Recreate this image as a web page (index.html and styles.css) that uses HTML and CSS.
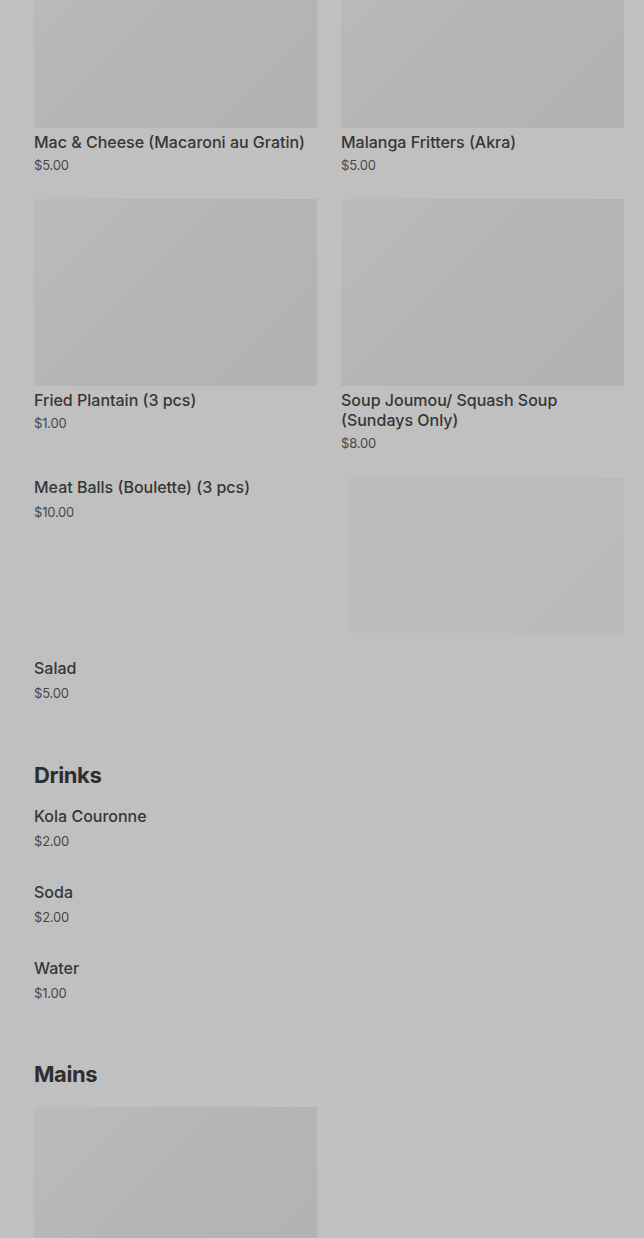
FILE: index.html
```html
<!DOCTYPE html>
<html lang="en">
<head>
  <meta charset="UTF-8">
  <meta name="viewport" content="width=device-width, initial-scale=1.0">
  <title>Menu</title>
  <link rel="stylesheet" href="styles.css">
</head>
<body>
  <main class="menu">
    <!-- Sides (heading scrolled out of view) -->
    <section class="menu-section">
      <div class="item-grid">
        <div class="item">
          <div class="item-image"></div>
          <h3 class="item-title">Mac &amp; Cheese (Macaroni au Gratin)</h3>
          <p class="item-price">$5.00</p>
        </div>
        <div class="item">
          <div class="item-image"></div>
          <h3 class="item-title">Malanga Fritters (Akra)</h3>
          <p class="item-price">$5.00</p>
        </div>
        <div class="item">
          <div class="item-image"></div>
          <h3 class="item-title">Fried Plantain (3 pcs)</h3>
          <p class="item-price">$1.00</p>
        </div>
        <div class="item">
          <div class="item-image"></div>
          <h3 class="item-title">Soup Joumou/ Squash Soup (Sundays Only)</h3>
          <p class="item-price">$8.00</p>
        </div>
        <div class="item text-only">
          <h3 class="item-title">Meat Balls (Boulette) (3 pcs)</h3>
          <p class="item-price">$10.00</p>
        </div>
        <div class="item">
          <div class="item-skeleton"></div>
        </div>
        <div class="item text-only">
          <h3 class="item-title">Salad</h3>
          <p class="item-price">$5.00</p>
        </div>
      </div>
    </section>

    <section class="menu-section">
      <h2 class="section-title">Drinks</h2>
      <div class="item-list">
        <div class="item text-only">
          <h3 class="item-title">Kola Couronne</h3>
          <p class="item-price">$2.00</p>
        </div>
        <div class="item text-only">
          <h3 class="item-title">Soda</h3>
          <p class="item-price">$2.00</p>
        </div>
        <div class="item text-only">
          <h3 class="item-title">Water</h3>
          <p class="item-price">$1.00</p>
        </div>
      </div>
    </section>

    <section class="menu-section mains">
      <h2 class="section-title">Mains</h2>
      <div class="item-grid">
        <div class="item">
          <div class="item-image"></div>
        </div>
      </div>
    </section>
  </main>
</body>
</html>
```

FILE: styles.css
```css
* {
  margin: 0;
  padding: 0;
  box-sizing: border-box;
}

body {
  font-family: Inter, "Noto Sans", sans-serif;
  background-color: #c0c0c0;
  color: #353535;
  overflow: hidden;
}

/* page is scrolled part way down the menu */
.menu {
  margin-top: -59px;
  padding: 0 20px 0 34px;
}

.menu-section + .menu-section {
  margin-top: 59px;
}

.menu-section.mains {
  margin-top: 58px;
}

.section-title {
  font-size: 22px;
  line-height: 28px;
  font-weight: 700;
  color: #2e2e2e;
  letter-spacing: -0.4px;
  margin-bottom: 17px;
}

.mains .section-title {
  margin-bottom: 19px;
}

.item-grid {
  display: grid;
  grid-template-columns: 1fr 1fr;
  column-gap: 24px;
  row-gap: 25px;
}

.item-list {
  display: flex;
  flex-direction: column;
  gap: 32px;
}

.item-image {
  height: 187px;
  background: linear-gradient(135deg, #bbbbbb 0%, #b5b5b5 45%, #b2b2b2 100%);
  margin-bottom: 4px;
}

.item-skeleton {
  height: 155px;
  margin: 1px 0 0 7px;
  background: linear-gradient(135deg, #bdbdbd, #bababa);
}

.item-title {
  font-size: 16px;
  line-height: 20px;
  font-weight: 500;
  color: #363636;
}

.item-price {
  font-size: 13px;
  line-height: 18px;
  color: #484848;
  margin-top: 4px;
  letter-spacing: -0.2px;
}

.text-only .item-price {
  margin-top: 6px;
}
```
